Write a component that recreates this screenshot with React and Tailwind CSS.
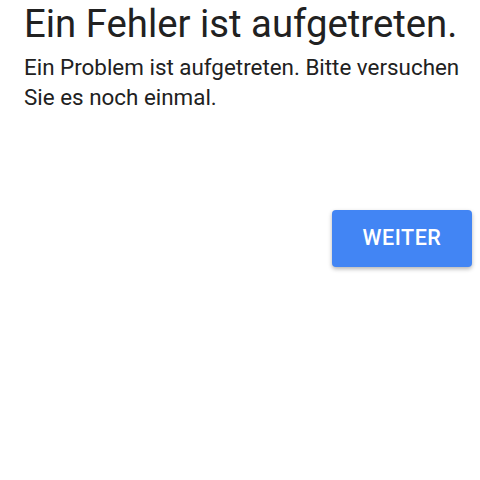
import React from 'react';

const App = () => {
  return (
    <div className="w-[480px] h-[480px] bg-white overflow-hidden" style={{ fontFamily: 'Roboto, "Noto Sans", sans-serif' }}>
      <div className="pl-6 pr-2">
        <h1 className="text-[38.3px] leading-[48px] text-[#212121] font-normal whitespace-nowrap">Ein Fehler ist aufgetreten.</h1>
        <p className="mt-[3.5px] text-[22.4px] leading-[30px] text-[#212121]">
          Ein Problem ist aufgetreten. Bitte versuchen Sie es noch einmal.
        </p>
        <div className="flex justify-end mt-[98.5px]">
          <button className="w-[140px] h-[57px] rounded-[4px] bg-[#4285f4] text-white text-[21.5px] font-medium tracking-wide shadow-[0_2px_4px_rgba(0,0,0,0.3)]">
            WEITER
          </button>
        </div>
      </div>
    </div>
  );
};

export default App;
